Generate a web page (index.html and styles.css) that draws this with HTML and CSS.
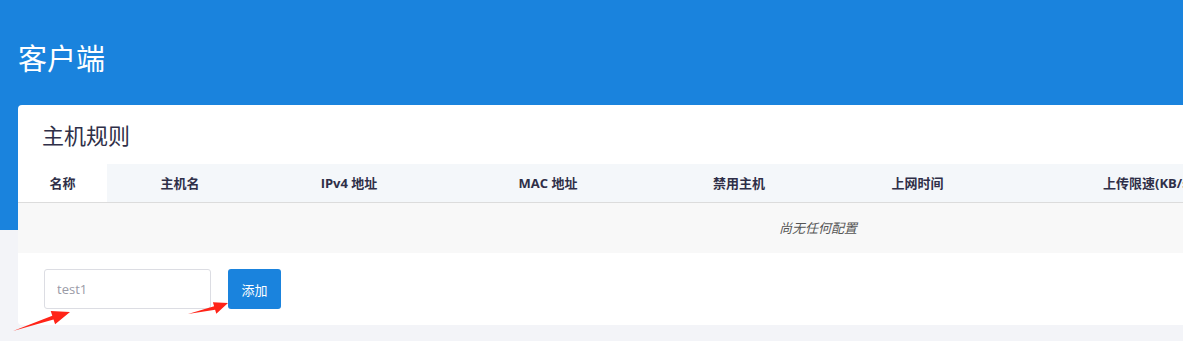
FILE: index.html
```html
<!DOCTYPE html>
<html lang="zh-CN">
<head>
  <meta charset="UTF-8" />
  <title>客户端</title>
  <link rel="stylesheet" href="styles.css">
</head>
<body>

  <!-- Cabecera azul -->
  <div class="cabecera">
    <h1>客户端</h1>
  </div>

  <div class="contenido">
    <div class="tarjeta">
      <h2>主机规则</h2>

      <table class="tabla">
        <colgroup>
          <col style="width: 89px">
          <col style="width: 146px">
          <col style="width: 192px">
          <col style="width: 206px">
          <col style="width: 176px">
          <col style="width: 181px">
          <col style="width: 280px">
          <col style="width: 207px">
          <col style="width: 123px">
        </colgroup>
        <thead>
          <tr>
            <th class="col-nombre">名称</th>
            <th>主机名</th>
            <th>IPv4 地址</th>
            <th>MAC 地址</th>
            <th>禁用主机</th>
            <th>上网时间</th>
            <th>上传限速(KB/s)</th>
            <th>下载限速(KB/s)</th>
            <th></th>
          </tr>
        </thead>
        <tbody>
          <tr>
            <td class="vacio" colspan="9">尚无任何配置</td>
          </tr>
        </tbody>
      </table>

      <div class="agregar">
        <input type="text" placeholder="test1" />
        <button type="button">添加</button>
      </div>
    </div>
  </div>

  <!-- Flechas de anotación -->
  <svg class="flechas" width="1183" height="341" viewBox="0 0 1183 341">
    <polygon points="13,331 52.3,315.8 50.7,311.1 70,312 55.1,324.3 53.5,319.6" fill="#ff2418" />
    <polygon points="188,314 214.1,306.3 212.9,302.3 228,303 216.3,313.7 215.1,309.7" fill="#ff2418" />
  </svg>

</body>
</html>
```

FILE: styles.css
```css
:root {
  --color-azul: #1a83dd;
  --color-fondo: #f3f4f8;
  --color-titulo: #2f2f48;
  --color-cabecera-tabla: #f4f7fa;
  --color-fila-vacia: #f8f8f8;
}

* {
  margin: 0;
  padding: 0;
  box-sizing: border-box;
}

body {
  font-family: "Open Sans", "Noto Sans CJK SC", sans-serif;
  background: var(--color-fondo);
  overflow: hidden;
  position: relative;
  height: 341px;
}

/* Cabecera */
.cabecera {
  background: var(--color-azul);
  height: 230px;
  margin-bottom: -125px;
  padding: 38px 18px 0;
}

.cabecera h1 {
  color: #fff;
  font-size: 29px;
  font-weight: normal;
  line-height: 38px;
  font-family: "Noto Sans CJK SC", sans-serif;
}

.contenido {
  padding-left: 18px;
}

.tarjeta {
  background: #fff;
  width: 1600px;
  border-radius: 4px;
}

.tarjeta h2 {
  font-family: "Noto Sans CJK SC", sans-serif;
  font-size: 22px;
  font-weight: normal;
  line-height: 30px;
  color: var(--color-titulo);
  padding: 14px 24px 15px;
}

/* Tabla */
.tabla {
  width: 1600px;
  border-collapse: collapse;
  table-layout: fixed;
}

.tabla th {
  height: 38px;
  font-size: 13px;
  font-weight: bold;
  color: var(--color-titulo);
  background: var(--color-cabecera-tabla);
  border-bottom: 1px solid #dcdcdc;
  text-align: center;
  white-space: nowrap;
}

.tabla th.col-nombre {
  background: #fff;
}

.tabla td.vacio {
  height: 51px;
  background: var(--color-fila-vacia);
  text-align: center;
  font-size: 13px;
  font-style: italic;
  color: #555;
}

/* Formulario de alta */
.agregar {
  display: flex;
  gap: 17px;
  padding: 16px 26px;
}

.agregar input {
  width: 167px;
  height: 40px;
  border: 1px solid #dcdde3;
  border-radius: 3px;
  padding: 0 12px;
  font-family: inherit;
  font-size: 13px;
  outline: none;
}

.agregar input::placeholder {
  color: #9a9aa6;
}

.agregar button {
  width: 53px;
  height: 40px;
  background: var(--color-azul);
  color: #fff;
  border: none;
  border-radius: 3px;
  font-family: "Noto Sans CJK SC", sans-serif;
  font-size: 13px;
  cursor: pointer;
}

.flechas {
  position: absolute;
  top: 0;
  left: 0;
  pointer-events: none;
}
```
